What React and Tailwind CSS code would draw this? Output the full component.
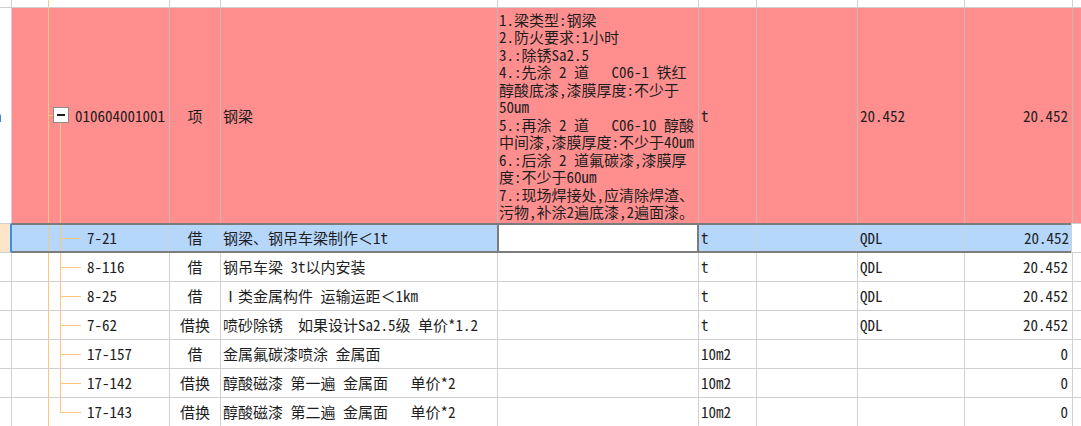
import React from "react";

const LINE = "bg-[#fcc67e]";

const kids = [
  { code: "7-21", type: "借", name: "钢梁、钢吊车梁制作＜1t", unit: "t", qdl: "QDL", amt: "20.452", sel: true },
  { code: "8-116", type: "借", name: "钢吊车梁 3t以内安装", unit: "t", qdl: "QDL", amt: "20.452" },
  { code: "8-25", type: "借", name: "Ⅰ类金属构件 运输运距＜1km", unit: "t", qdl: "QDL", amt: "20.452" },
  { code: "7-62", type: "借换", name: "喷砂除锈\u2002\u2002如果设计Sa2.5级\u2002单价*1.2", unit: "t", qdl: "QDL", amt: "20.452" },
  { code: "17-157", type: "借", name: "金属氟碳漆喷涂 金属面", unit: "10m2", qdl: "", amt: "0" },
  { code: "17-142", type: "借换", name: "醇酸磁漆 第一遍 金属面\u2002\u2002\u2002单价*2", unit: "10m2", qdl: "", amt: "0" },
  { code: "17-143", type: "借换", name: "醇酸磁漆 第二遍 金属面\u2002\u2002\u2002单价*2", unit: "10m2", qdl: "", amt: "0", last: true },
];

const desc = [
  "1.梁类型:钢梁",
  "2.防火要求:1小时",
  "3.:除锈Sa2.5",
  "4.:先涂 2 道\u2002\u2002\u2002C06-1 铁红",
  "醇酸底漆,漆膜厚度:不少于",
  "50um",
  "5.:再涂 2 道\u2002\u2002\u2002C06-10 醇酸",
  "中间漆,漆膜厚度:不少于40um",
  "6.:后涂 2 道氟碳漆,漆膜厚",
  "度:不少于60um",
  "7.:现场焊接处,应清除焊渣、",
  "污物,补涂2遍底漆,2遍面漆。",
];

function Name({ text }) {
  const parts = text.split("＜");
  if (parts.length === 1) return <>{text}</>;
  return (
    <>
      {parts[0]}
      <span className="[font-feature-settings:normal]">＜</span>
      {parts[1]}
    </>
  );
}

function ChildTree({ code, last }) {
  return (
    <div className="relative w-[158px] shrink-0 h-full border-r border-[#d0d0d0] flex items-center">
      <div className={`absolute left-[36px] top-0 bottom-0 w-px ${LINE}`} />
      <div className={`absolute left-[48px] top-0 w-px ${LINE} ${last ? "h-1/2" : "bottom-0"}`} />
      <div className={`absolute left-[48px] top-1/2 w-[21px] h-px ${LINE}`} />
      <span className="pl-[75px]">{code}</span>
    </div>
  );
}

function ChildRow({ r }) {
  if (r.sel) {
    return (
      <div className="flex h-[30px]">
        <div className="w-[12px] shrink-0 bg-[#fee5c9] border-y border-[#d0d0d0] border-r-2 border-r-[#3d8de6]" />
        <div className="flex h-full border-y-2 border-[#7c7c7c] bg-[#b6d7fc]">
          <ChildTree code={r.code} last={r.last} />
          <div className="w-[51px] shrink-0 h-full border-r border-[#c8d4e0] flex items-center justify-center">{r.type}</div>
          <div className="w-[276px] shrink-0 h-full flex items-center pl-[2px] whitespace-pre"><Name text={r.name} /></div>
          <div className="w-[202px] shrink-0 h-full bg-white border-x-2 border-[#7c7c7c]" />
          <div className="w-[58px] shrink-0 h-full border-r border-[#c8d4e0] flex items-center pl-[2px]">{r.unit}</div>
          <div className="w-[101px] shrink-0 h-full border-r border-[#c8d4e0]" />
          <div className="w-[107px] shrink-0 h-full border-r border-[#c8d4e0] flex items-center pl-[2px]">{r.qdl}</div>
          <div className="w-[106px] shrink-0 h-full flex items-center justify-end pr-[2px]">{r.amt}</div>
        </div>
        <div className="flex-1 h-full border-l border-y border-[#d0d0d0] bg-white" />
      </div>
    );
  }
  return (
    <div className="flex h-[29px] border-b border-[#d0d0d0] bg-white">
      <div className="w-[12px] shrink-0 h-full border-r border-[#d0d0d0]" />
      <ChildTree code={r.code} last={r.last} />
      <div className="w-[51px] shrink-0 h-full border-r border-[#d0d0d0] flex items-center justify-center">{r.type}</div>
      <div className="w-[277px] shrink-0 h-full border-r border-[#d0d0d0] flex items-center pl-[2px] whitespace-pre"><Name text={r.name} /></div>
      <div className="w-[201px] shrink-0 h-full border-r border-[#d0d0d0]" />
      <div className="w-[58px] shrink-0 h-full border-r border-[#d0d0d0] flex items-center pl-[2px]">{r.unit}</div>
      <div className="w-[101px] shrink-0 h-full border-r border-[#d0d0d0]" />
      <div className="w-[107px] shrink-0 h-full border-r border-[#d0d0d0] flex items-center pl-[2px]">{r.qdl}</div>
      <div className="w-[108px] shrink-0 h-full border-r border-[#d0d0d0] flex items-center justify-end pr-[4px]">{r.amt}</div>
      <div className="flex-1 h-full" />
    </div>
  );
}

export default function App() {
  return (
    <div className="w-[1081px] h-[426px] overflow-hidden bg-white text-[#1e1e1e] text-[15px] leading-[17.5px] font-['Noto_Sans_CJK_SC',sans-serif] [font-feature-settings:'hwid']">
      {/* header remnant */}
      <div className="flex h-[8px] border-b border-[#cfcfcf]">
        <div className="w-[12px] shrink-0 h-full border-r border-[#d0d0d0]" />
        <div className="relative w-[158px] shrink-0 h-full border-r border-[#d0d0d0]">
          <div className={`absolute left-[36px] top-0 bottom-0 w-px ${LINE}`} />
        </div>
        <div className="w-[51px] shrink-0 h-full border-r border-[#d0d0d0]" />
        <div className="w-[277px] shrink-0 h-full border-r border-[#d0d0d0]" />
        <div className="w-[201px] shrink-0 h-full border-r border-[#d0d0d0]" />
        <div className="w-[58px] shrink-0 h-full border-r border-[#d0d0d0]" />
        <div className="w-[101px] shrink-0 h-full border-r border-[#d0d0d0]" />
        <div className="w-[107px] shrink-0 h-full border-r border-[#d0d0d0]" />
        <div className="w-[108px] shrink-0 h-full border-r border-[#d0d0d0]" />
        <div className="flex-1 h-full" />
      </div>

      {/* parent item row */}
      <div className="flex h-[215px]">
        <div className="w-[12px] shrink-0 h-full border-r border-[#d0d0d0] bg-white overflow-hidden flex items-center">
          <span className="ml-[-6px]">a</span>
        </div>
        <div className="flex flex-1 h-full bg-[#ff8f8f]">
          <div className="relative w-[158px] shrink-0 h-full border-r border-[#c9b5b5] flex items-center">
            <div className={`absolute left-[36px] top-0 bottom-0 w-px ${LINE}`} />
            <div className={`absolute left-[36px] top-[107px] w-[5px] h-px ${LINE}`} />
            <div className={`absolute left-[48px] top-[114px] bottom-0 w-px ${LINE}`} />
            <div className="absolute left-[41px] top-[99px] w-[16px] h-[16px] bg-white border border-[#8a8a8a] flex items-center justify-center">
              <div className="w-[8px] h-[2px] bg-[#1e1e1e]" />
            </div>
            <span className="pl-[63px]">010604001001</span>
          </div>
          <div className="w-[51px] shrink-0 h-full border-r border-[#c9b5b5] flex items-center justify-center">项</div>
          <div className="w-[277px] shrink-0 h-full border-r border-[#c9b5b5] flex items-center pl-[2px]">钢梁</div>
          <div className="w-[201px] shrink-0 h-full border-r border-[#c9b5b5] flex items-center pl-[1px]">
            <div className="whitespace-pre">
              {desc.map((l, i) => (
                <div key={i}>{l}</div>
              ))}
            </div>
          </div>
          <div className="w-[58px] shrink-0 h-full border-r border-[#c9b5b5] flex items-center pl-[2px]">t</div>
          <div className="w-[101px] shrink-0 h-full border-r border-[#c9b5b5]" />
          <div className="w-[107px] shrink-0 h-full border-r border-[#c9b5b5] flex items-center pl-[2px]">20.452</div>
          <div className="w-[108px] shrink-0 h-full border-r border-[#c9b5b5] flex items-center justify-end pr-[4px]">20.452</div>
          <div className="flex-1 h-full" />
        </div>
      </div>

      {kids.map((r, i) => (
        <ChildRow key={i} r={r} />
      ))}
    </div>
  );
}
